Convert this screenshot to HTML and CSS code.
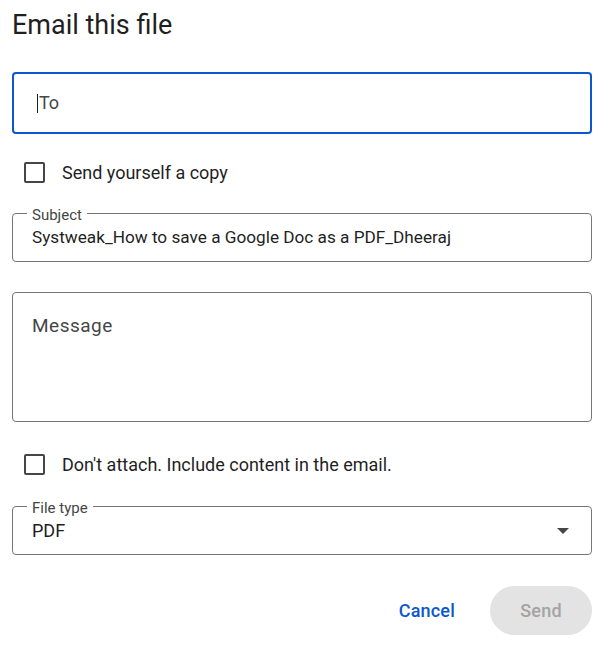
FILE: index.html
```html
<!DOCTYPE html>
<html>
<head>
<meta charset="utf-8">
<link rel="stylesheet" href="styles.css">
</head>
<body>
<div class="dialog">
  <h1 class="title">Email this file</h1>
  <div class="to-field"><span class="caret"></span><span class="placeholder">To</span></div>
  <label class="check-row first"><span class="checkbox"></span><span class="check-label">Send yourself a copy</span></label>
  <fieldset class="outlined subject">
    <legend class="legend">Subject</legend>
    <div class="value subject-value">Systweak_How to save a Google Doc as a PDF_Dheeraj</div>
  </fieldset>
  <div class="message"><span class="placeholder message-text">Message</span></div>
  <label class="check-row second"><span class="checkbox"></span><span class="check-label">Don't attach. Include content in the email.</span></label>
  <fieldset class="outlined filetype">
    <legend class="legend">File type</legend>
    <div class="select-row"><span class="value">PDF</span><span class="arrow"></span></div>
  </fieldset>
  <div class="actions">
    <button class="btn cancel">Cancel</button>
    <button class="btn send">Send</button>
  </div>
</div>
</body>
</html>
```
FILE: styles.css
```css
html, body {
  margin: 0;
  padding: 0;
  background: #ffffff;
}
body {
  font-family: Roboto, "Liberation Sans", Arial, sans-serif;
  color: #1f1f1f;
}
.dialog {
  padding: 9px 21px 0 12px;
}
.title {
  margin: 0;
  font-size: 27px;
  line-height: 32px;
  font-weight: 400;
  color: #1f1f1f;
}
.to-field {
  margin-top: 31px;
  height: 58px;
  border: 2px solid #0b57d0;
  border-radius: 4px;
  display: flex;
  align-items: center;
  padding-left: 23px;
}
.caret {
  width: 1px;
  height: 19px;
  background: #1f1f1f;
  margin-right: 1px;
}
.placeholder {
  font-size: 18px;
  line-height: 24px;
  color: #444746;
}
.message-text {
  font-size: 19px;
  letter-spacing: 0.5px;
}
.check-row {
  display: flex;
  align-items: center;
  gap: 17px;
  padding-left: 12px;
  height: 21px;
}
.check-row.first {
  margin-top: 28px;
}
.check-row.second {
  margin-top: 32px;
}
.checkbox {
  box-sizing: border-box;
  flex: none;
  width: 21px;
  height: 21px;
  border: 2px solid #444746;
  border-radius: 2px;
}
.check-label {
  font-size: 18px;
  line-height: 20px;
  color: #1f1f1f;
}
.outlined {
  margin: 0;
  border: 1px solid #747775;
  border-radius: 4px;
  padding: 4px 15px 12px 14px;
  min-width: 0;
}
.legend {
  padding: 4px 5px 0;
  font-size: 15px;
  line-height: 12px;
  color: #444746;
}
.subject {
  margin-top: 22px;
}
.value {
  padding-left: 5px;
  font-size: 18px;
  line-height: 24px;
  color: #1f1f1f;
}
.subject-value {
  font-size: 17.2px;
  white-space: nowrap;
}
.message {
  margin-top: 30px;
  box-sizing: border-box;
  height: 130px;
  border: 1px solid #747775;
  border-radius: 4px;
  padding: 21px 19px 0;
}
.filetype {
  margin-top: 23px;
  padding-top: 5px;
  padding-bottom: 11px;
  padding-right: 22px;
}
.select-row {
  display: flex;
  align-items: center;
  justify-content: space-between;
}
.arrow {
  width: 0;
  height: 0;
  border-left: 6px solid transparent;
  border-right: 6px solid transparent;
  border-top: 6px solid #444746;
}
.actions {
  margin-top: 31px;
  display: flex;
  justify-content: flex-end;
  gap: 11px;
}
.btn {
  font-family: Roboto, "Liberation Sans", Arial, sans-serif;
  font-size: 18px;
  font-weight: 500;
  letter-spacing: 0.2px;
  height: 49px;
  border: none;
  border-radius: 25px;
  background: transparent;
  cursor: pointer;
}
.cancel {
  color: #0b57d0;
  padding: 0 24px;
}
.send {
  width: 102px;
  background: #e3e3e3;
  color: #a3a3a3;
}
```
